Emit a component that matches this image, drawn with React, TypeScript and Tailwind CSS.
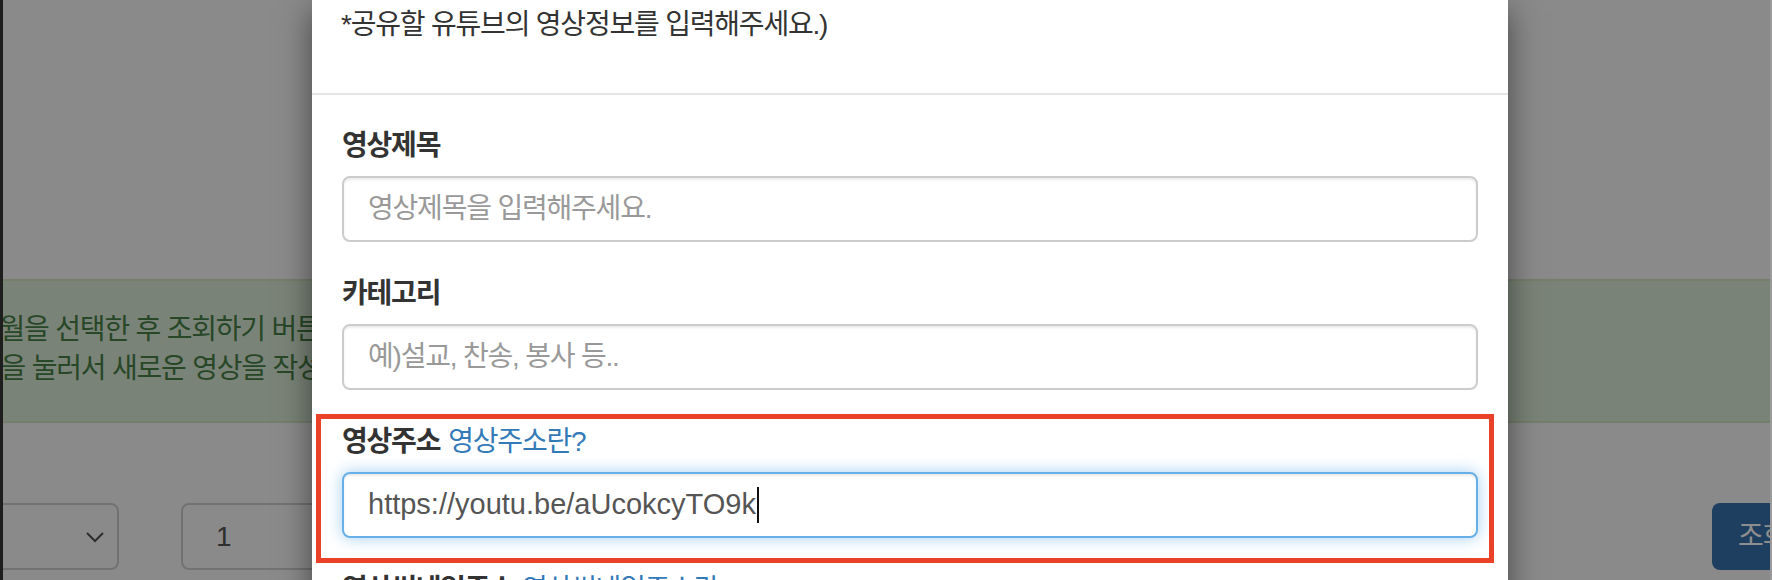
const stack = "font-['Liberation_Sans','Noto_Sans_CJK_KR',sans-serif]";

function Label({ text, link }: { text: string; link?: string }) {
  return (
    <div className="mb-[10px] h-[40px] text-[28px] leading-[40px] tracking-[-1.2px] whitespace-nowrap">
      <span className="font-bold text-[#333]">{text}</span>
      {link && <span className="ml-[8px] text-[#337ab7]">{link}</span>}
    </div>
  );
}

function Field({
  label,
  link,
  placeholder,
  value,
  focused,
}: {
  label: string;
  link?: string;
  placeholder?: string;
  value?: string;
  focused?: boolean;
}) {
  return (
    <div className="mb-[32px]">
      <Label text={label} link={link} />
      <div
        className={
          focused
            ? "flex h-[66px] items-center rounded-[8px] border-2 border-[#66afe9] bg-white px-[24px] shadow-[inset_0_2px_2px_rgba(0,0,0,0.075),0_0_16px_rgba(102,175,233,0.6)]"
            : "flex h-[66px] items-center rounded-[8px] border-2 border-[#ccc] bg-white px-[24px] shadow-[inset_0_2px_2px_rgba(0,0,0,0.075)]"
        }
      >
        {value ? (
          <span className="flex items-center text-[29px] text-[#555]">
            {value}
            <span className="ml-[1px] h-[36px] w-[2px] bg-[#111]" />
          </span>
        ) : (
          <span className="text-[28px] tracking-[-1.2px] text-[#999]">{placeholder}</span>
        )}
      </div>
    </div>
  );
}

export default function App() {
  return (
    <div className={`relative h-[580px] w-[1772px] overflow-hidden bg-[#8a8a8a] ${stack}`}>
      {/* page under the backdrop */}
      <div className="flex h-full">
        <div className="w-[3px] shrink-0 bg-[#1e1e1e]" />
        <div className="flex min-w-0 flex-1 flex-col overflow-hidden pt-[279px]">
          <div className="h-[144px] overflow-hidden border-y-2 border-[#747e6b] bg-[#7a8377] pt-[29px] text-[28px] leading-[39px] tracking-[-1.2px] text-[#274727] whitespace-nowrap">
            <div className="-ml-[28px]">년월을 선택한 후 조회하기 버튼을 클릭해주세요.</div>
            <div className="-ml-[27px]">튼을 눌러서 새로운 영상을 작성해주세요.</div>
          </div>
          <div className="mt-[80px] flex h-[67px]">
            <div className="-ml-[44px] flex w-[160px] shrink-0 items-center justify-end rounded-[8px] border-2 border-[#727272] pr-[12px]">
              <svg width="20" height="12" viewBox="0 0 20 12" fill="none">
                <polyline points="2,2 10,10 18,2" stroke="#2e2e2e" strokeWidth="2" />
              </svg>
            </div>
            <div className="ml-[62px] flex w-[220px] shrink-0 items-center rounded-[8px] border-2 border-[#727272] pl-[33px] text-[28px] text-[#2e2e2e]">
              1
            </div>
            <div className="-mr-[70px] ml-auto flex w-[128px] shrink-0 items-center rounded-[8px] bg-[#1f3f60] pl-[26px] text-[28px] tracking-[-1.2px] text-[#8e8e8e]">
              조회
            </div>
          </div>
        </div>
        <div className="w-[2px] shrink-0 bg-[#9a9a9a]" />
      </div>

      {/* modal */}
      <div className="absolute left-[312px] top-0 h-[640px] w-[1196px] bg-white shadow-[0_10px_30px_rgba(0,0,0,0.5)]">
        <div className="h-[95px] border-b-2 border-[#e5e5e5] px-[29px] pt-[5px]">
          <p className="text-[28px] leading-[40px] tracking-[-1.2px] text-[#333] whitespace-nowrap">
            *공유할 유튜브의 영상정보를 입력해주세요.)
          </p>
        </div>
        <div className="relative px-[30px] pt-[31px]">
          <Field label="영상제목" placeholder="영상제목을 입력해주세요." />
          <Field label="카테고리" placeholder="예)설교, 찬송, 봉사 등.." />
          <Field label="영상주소" link="영상주소란?" value="https://youtu.be/aUcokcyTO9k" focused />
          <Label text="영상썸네일주소" link="영상썸네일주소란?" />
          {/* highlight around the address field */}
          <div className="pointer-events-none absolute left-[4px] top-[319px] h-[149px] w-[1178px] border-[5px] border-[#ea4229]" />
        </div>
      </div>
    </div>
  );
}
